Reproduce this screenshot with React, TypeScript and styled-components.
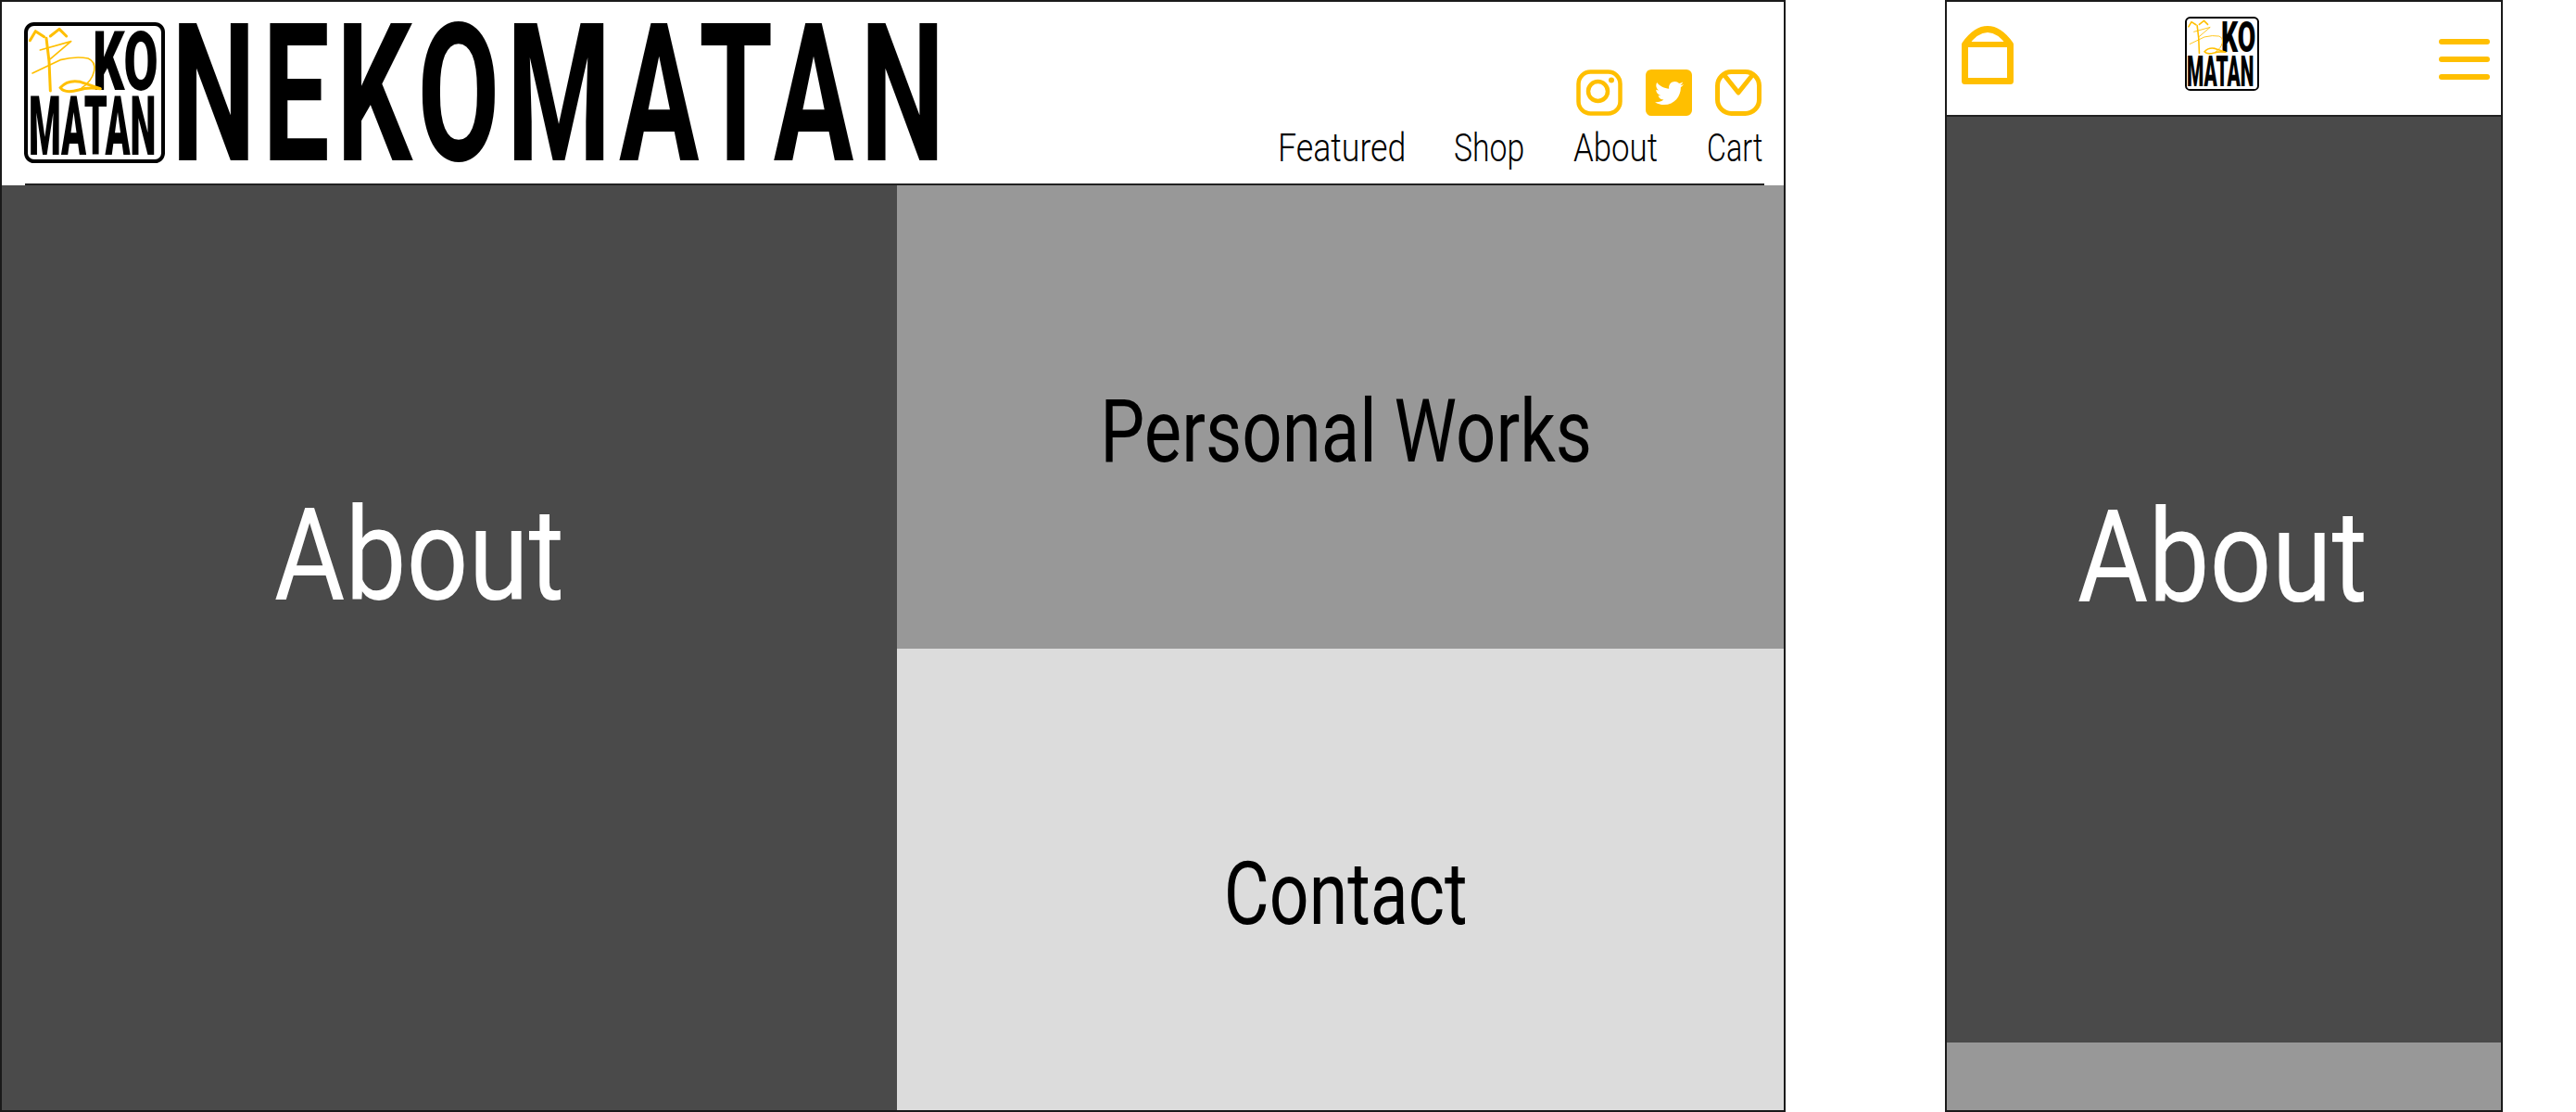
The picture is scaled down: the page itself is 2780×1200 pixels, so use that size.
import React from "react";
import styled, { createGlobalStyle } from "styled-components";
import { FaTwitter } from "react-icons/fa";

const YELLOW = "#ffbf00";
const FONT = `Roboto, "Liberation Sans", sans-serif`;

const Global = createGlobalStyle`
  html, body { margin: 0; padding: 0; background: #fff; overflow: hidden; }
  * { box-sizing: border-box; }
`;

const Page = styled.div`
  display: flex;
  align-items: flex-start;
  width: 2780px;
  height: 1200px;
  font-family: ${FONT};
`;

const Frame = styled.section<{ $w: number; $gap?: number }>`
  display: flex;
  flex-direction: column;
  flex: none;
  width: ${(p) => p.$w}px;
  height: 1200px;
  margin-left: ${(p) => p.$gap ?? 0}px;
  border: 2px solid #1a1a1a;
  background: #fff;
  overflow: hidden;
`;

const DesktopHeader = styled.header`
  display: flex;
  flex-direction: column;
  flex: none;
  height: 198px;
`;

const HeaderRow = styled.div`
  display: flex;
  flex: 1;
  min-height: 0;
  padding: 22px 22px 0 24px;
`;

const Rule = styled.div`
  flex: none;
  height: 2px;
  margin: 0 21px 0 25px;
  background: #222;
`;

const Wordmark = styled.div`
  flex: none;
  width: max-content;
  margin: 2px -520px 0 7px;
  font-weight: 700;
  font-size: 208px;
  line-height: 152px;
  letter-spacing: 12px;
  color: #000;
  white-space: nowrap;
  transform: scaleX(0.619);
  transform-origin: 0 50%;
`;

const Logo = styled.div<{ $size: number }>`
  position: relative;
  display: flex;
  flex-direction: column;
  flex: none;
  width: ${(p) => p.$size}px;
  height: ${(p) => p.$size}px;
  font-size: ${(p) => p.$size}px;
  border: 0.03em solid #000;
  border-radius: 0.07em;
  background: #fff;
  color: #000;
  font-weight: 900;
`;

const LogoLine = styled.span<{ $sx: number; $left: number; $top: number }>`
  display: block;
  width: 0;
  height: 0.711em;
  margin: ${(p) => p.$top}em 0 0 ${(p) => p.$left}em;
  font-size: 0.58em;
  line-height: 0.711em;
  white-space: nowrap;
  transform: scaleX(${(p) => p.$sx});
  transform-origin: 0 50%;
`;

const Scribble = styled.svg`
  position: absolute;
  left: -0.03em;
  top: -0.03em;
  width: 1em;
  height: 1em;
`;

const Tools = styled.nav`
  display: flex;
  flex-direction: column;
  align-items: flex-end;
  margin-left: auto;
  padding-top: 51px;
`;

const IconRow = styled.div`
  display: flex;
  gap: 25px;
  height: 50px;
  padding-right: 2px;
`;

const IconBox = styled.div`
  display: flex;
  align-items: center;
  justify-content: center;
  width: 50px;
  height: 50px;
`;

const TwitterBox = styled(IconBox)`
  background: ${YELLOW};
  border-radius: 6px;
  color: #fff;
  font-size: 31px;
`;

const NavRow = styled.div`
  display: flex;
  gap: 55px;
  margin-top: 9px;
  padding-right: 2px;
`;

const NavItem = styled.a<{ $w: number; $sx: number }>`
  display: block;
  width: ${(p) => p.$w}px;
  font-size: 43px;
  font-weight: 300;
  line-height: 50px;
  color: #000;
  white-space: nowrap;
  transform: scaleX(${(p) => p.$sx});
  transform-origin: 0 50%;
`;

const Tiles = styled.main`
  display: grid;
  flex: 1;
  min-height: 0;
  grid-template-columns: 966px 1fr;
  grid-template-rows: 500px 1fr;
`;

const Tile = styled.div<{ $bg: string; $span?: boolean }>`
  display: flex;
  align-items: center;
  justify-content: center;
  background: ${(p) => p.$bg};
  grid-row: ${(p) => (p.$span ? "1 / span 2" : "auto")};
  padding: ${(p) => (p.$span ? "0 66px 200px 0" : "0")};
`;

const BigLabel = styled.span<{ $color: string; $size: number; $sx: number; $dy: number; $dx?: number }>`
  display: inline-block;
  font-size: ${(p) => p.$size}px;
  font-weight: 400;
  line-height: 1;
  color: ${(p) => p.$color};
  white-space: nowrap;
  margin-top: ${(p) => p.$dy}px;
  margin-left: ${(p) => p.$dx ?? 0}px;
  transform: scaleX(${(p) => p.$sx});
`;

const MobileHeader = styled.header`
  display: flex;
  flex: none;
  justify-content: space-between;
  align-items: flex-start;
  height: 124px;
  padding: 0 12px 0 16px;
  border-bottom: 2px solid #222;
`;

const HeaderSlot = styled.div<{ $top: number; $right?: number }>`
  flex: none;
  margin-top: ${(p) => p.$top}px;
  margin-right: ${(p) => p.$right ?? 0}px;
`;

const Burger = styled.div`
  display: flex;
  flex-direction: column;
  gap: 13px;
  width: 55px;
`;

const BurgerBar = styled.span`
  display: block;
  height: 6px;
  border-radius: 3px;
  background: ${YELLOW};
`;

const MobileAbout = styled.div`
  display: flex;
  flex: none;
  align-items: center;
  justify-content: center;
  height: 999px;
  background: #4a4a4a;
  padding-bottom: 50px;
`;

const MobilePeek = styled.div`
  flex: 1;
  background: #989898;
`;

const LogoMark = ({ size }: { size: number }) => (
  <Logo $size={size}>
    <LogoLine $sx={0.61} $left={0.79} $top={0.095}>KO</LogoLine>
    <LogoLine $sx={0.45} $left={0.01} $top={0.08}>MATAN</LogoLine>
    <Scribble viewBox="0 0 456 456" aria-hidden="true">
      <g fill="none" stroke={YELLOW} strokeLinecap="round" strokeLinejoin="round">
        <path strokeWidth="9" d="M22 62 L40 32 L68 50" />
        <path strokeWidth="9" d="M88 48 L117 25 L140 48" />
        <path strokeWidth="5" d="M55 93 L155 65 L88 122" />
        <path strokeWidth="9" d="M75 55 L84 130 L88 225" />
        <path strokeWidth="5" d="M30 168 L120 125 Q170 112 210 120 Q235 130 230 160 Q222 195 190 215" />
        <path strokeWidth="9" d="M120 215 Q145 188 185 196 L250 218 Q210 212 180 222 Q135 235 120 215" />
      </g>
    </Scribble>
  </Logo>
);

export default function App() {
  return (
    <Page>
      <Global />
      <Frame $w={1927}>
        <DesktopHeader>
          <HeaderRow>
            <LogoMark size={152} />
            <Wordmark>NEKOMATAN</Wordmark>
            <Tools>
              <IconRow>
                <IconBox>
                  <svg width="50" height="50" viewBox="0 0 50 50" fill="none" stroke={YELLOW} strokeWidth="4.5">
                    <rect x="2.5" y="2.5" width="45" height="45" rx="13" />
                    <circle cx="23.5" cy="23.5" r="10.5" />
                    <circle cx="38" cy="11.5" r="3" fill={YELLOW} stroke="none" />
                  </svg>
                </IconBox>
                <TwitterBox>
                  <FaTwitter />
                </TwitterBox>
                <IconBox>
                  <svg width="50" height="50" viewBox="0 0 50 50" fill="none" stroke={YELLOW} strokeWidth="5" strokeLinejoin="round">
                    <rect x="2.5" y="2.5" width="45" height="45" rx="15" />
                    <path d="M9 5 L25 25 L41 5" />
                  </svg>
                </IconBox>
              </IconRow>
              <NavRow>
                <NavItem $w={135} $sx={0.83}>Featured</NavItem>
                <NavItem $w={74} $sx={0.785}>Shop</NavItem>
                <NavItem $w={89} $sx={0.81}>About</NavItem>
                <NavItem $w={59} $sx={0.75}>Cart</NavItem>
              </NavRow>
            </Tools>
          </HeaderRow>
          <Rule />
        </DesktopHeader>
        <Tiles>
          <Tile $bg="#4a4a4a" $span>
            <BigLabel $color="#fff" $size={140} $sx={0.84} $dy={0}>About</BigLabel>
          </Tile>
          <Tile $bg="#989898">
            <BigLabel $color="#000" $size={94} $sx={0.81} $dy={32} $dx={12}>Personal Works</BigLabel>
          </Tile>
          <Tile $bg="#dcdcdc">
            <BigLabel $color="#000" $size={94} $sx={0.8} $dy={32} $dx={12}>Contact</BigLabel>
          </Tile>
        </Tiles>
      </Frame>
      <Frame $w={602} $gap={172}>
        <MobileHeader>
          <HeaderSlot $top={26}>
            <svg width="56" height="63" viewBox="0 0 56 63" fill="none" stroke={YELLOW} strokeWidth="7" strokeLinejoin="round">
              <path d="M3.5 20 C12 8 20 3.5 28 3.5 C36 3.5 44 8 52.5 20 L52.5 59.5 L3.5 59.5 Z" />
              <path d="M3.5 20 L52.5 20" strokeWidth="6" />
            </svg>
          </HeaderSlot>
          <HeaderSlot $top={16} $right={9}>
            <LogoMark size={80} />
          </HeaderSlot>
          <HeaderSlot $top={40}>
            <Burger>
              <BurgerBar />
              <BurgerBar />
              <BurgerBar />
            </Burger>
          </HeaderSlot>
        </MobileHeader>
        <MobileAbout>
          <BigLabel $color="#fff" $size={140} $sx={0.84} $dy={0} $dx={-3}>About</BigLabel>
        </MobileAbout>
        <MobilePeek />
      </Frame>
    </Page>
  );
}
